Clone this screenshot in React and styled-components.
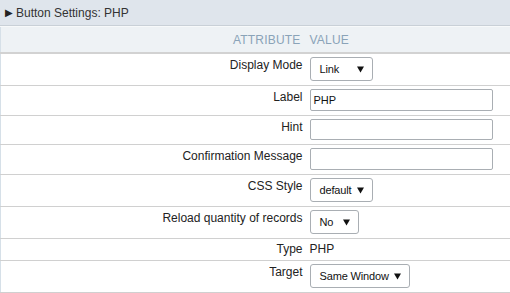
import React from "react";
import styled, { createGlobalStyle } from "styled-components";

const GlobalStyle = createGlobalStyle`
  html, body {
    margin: 0;
    padding: 0;
    background: #fff;
  }
  body {
    font-family: "Liberation Sans", Arial, sans-serif;
    font-size: 12px;
    color: #333;
  }
`;

const Panel = styled.div`
  width: 510px;
  height: 293px;
  overflow: hidden;
  background: #fff;
`;

const TitleBar = styled.div`
  height: 25px;
  display: flex;
  align-items: center;
  gap: 3px;
  padding: 0 5px;
  background: #dfe5ec;
  border-bottom: 1px solid #c9d0d7;
  color: #333;
  font-size: 12px;
`;

const Caret = styled.span`
  font-size: 10px;
  color: #222;
  line-height: 1;
`;

const Table = styled.table`
  width: 100%;
  border-collapse: collapse;
  border-left: 1px solid #d6e0e8;
  table-layout: fixed;
`;

const Col = styled.col`
  width: ${(p) => (p.$w ? `${p.$w}px` : "auto")};
`;

const HeadRow = styled.tr`
  background: #eef2f5;
  border-top: 1px solid #f7f9fa;
  border-bottom: 2px solid #d2d2d2;
`;

const HeadCell = styled.th`
  height: 24px;
  padding: 1px ${(p) => (p.$right ? "5px" : "4px")} 0;
  text-align: ${(p) => (p.$right ? "right" : "left")};
  font-size: 12px;
  font-weight: normal;
  letter-spacing: 0.2px;
  color: #8aa3b8;
`;

const Row = styled.tr`
  border-bottom: 1px solid #d0d0d0;
`;

const LabelCell = styled.td`
  padding: ${(p) => (p.$plain ? "3px" : "3px 3px 4px")} 3px;
  text-align: right;
  vertical-align: top;
  color: #222;
  font-size: 12px;
  line-height: ${(p) => (p.$plain ? "15px" : "17px")};
`;

const ValueCell = styled.td`
  padding: ${(p) => (p.$plain ? "3px 4px" : "3px 4px 4px")};
  vertical-align: top;
  color: #222;
  font-size: 12px;
  line-height: 15px;
`;

const SelectBox = styled.div`
  box-sizing: border-box;
  width: ${(p) => p.$w}px;
  height: 24px;
  display: flex;
  align-items: center;
  justify-content: space-between;
  gap: 4px;
  padding: 1px 8px 0 9px;
  border: 1px solid #a9aeb3;
  border-radius: 3px;
  background: #fff;
  font-size: 11px;
  letter-spacing: -0.15px;
  color: #111;
  white-space: nowrap;
`;

const Arrow = styled.svg`
  flex: none;
  width: 7px;
  height: 7px;
`;

const TextInput = styled.div`
  box-sizing: border-box;
  width: 183px;
  height: ${(p) => p.$h || 22}px;
  display: flex;
  align-items: center;
  padding: 1px 3px 0;
  border: 1px solid #a9aeb3;
  border-radius: 2px;
  background: #fff;
  font-size: 11px;
  color: #111;
`;

const Select = ({ value, width }) => (
  <SelectBox $w={width}>
    <span>{value}</span>
    <Arrow viewBox="0 0 7 7">
      <path d="M0 0.5 H7 L3.5 6.5 Z" fill="#111" />
    </Arrow>
  </SelectBox>
);

const rows = [
  { label: "Display Mode", kind: "select", value: "Link", width: 63 },
  { label: "Label", kind: "input", value: "PHP", h: 22 },
  { label: "Hint", kind: "input", value: "", h: 21 },
  { label: "Confirmation Message", kind: "input", value: "", h: 22 },
  { label: "CSS Style", kind: "select", value: "default", width: 63 },
  { label: "Reload quantity of records", kind: "select", value: "No", width: 49 },
  { label: "Type", kind: "text", value: "PHP" },
  { label: "Target", kind: "select", value: "Same Window", width: 100 },
];

export default function App() {
  return (
    <>
      <GlobalStyle />
      <Panel>
        <TitleBar>
          <Caret>▶</Caret>
          <span>Button Settings: PHP</span>
        </TitleBar>
        <Table>
          <colgroup>
            <Col $w={305} />
            <Col />
          </colgroup>
          <thead>
            <HeadRow>
              <HeadCell $right>ATTRIBUTE</HeadCell>
              <HeadCell>VALUE</HeadCell>
            </HeadRow>
          </thead>
          <tbody>
            {rows.map((r) => (
              <Row key={r.label}>
                <LabelCell $plain={r.kind === "text"}>{r.label}</LabelCell>
                <ValueCell $plain={r.kind === "text"}>
                  {r.kind === "select" && <Select value={r.value} width={r.width} />}
                  {r.kind === "input" && <TextInput $h={r.h}>{r.value}</TextInput>}
                  {r.kind === "text" && r.value}
                </ValueCell>
              </Row>
            ))}
          </tbody>
        </Table>
      </Panel>
    </>
  );
}
